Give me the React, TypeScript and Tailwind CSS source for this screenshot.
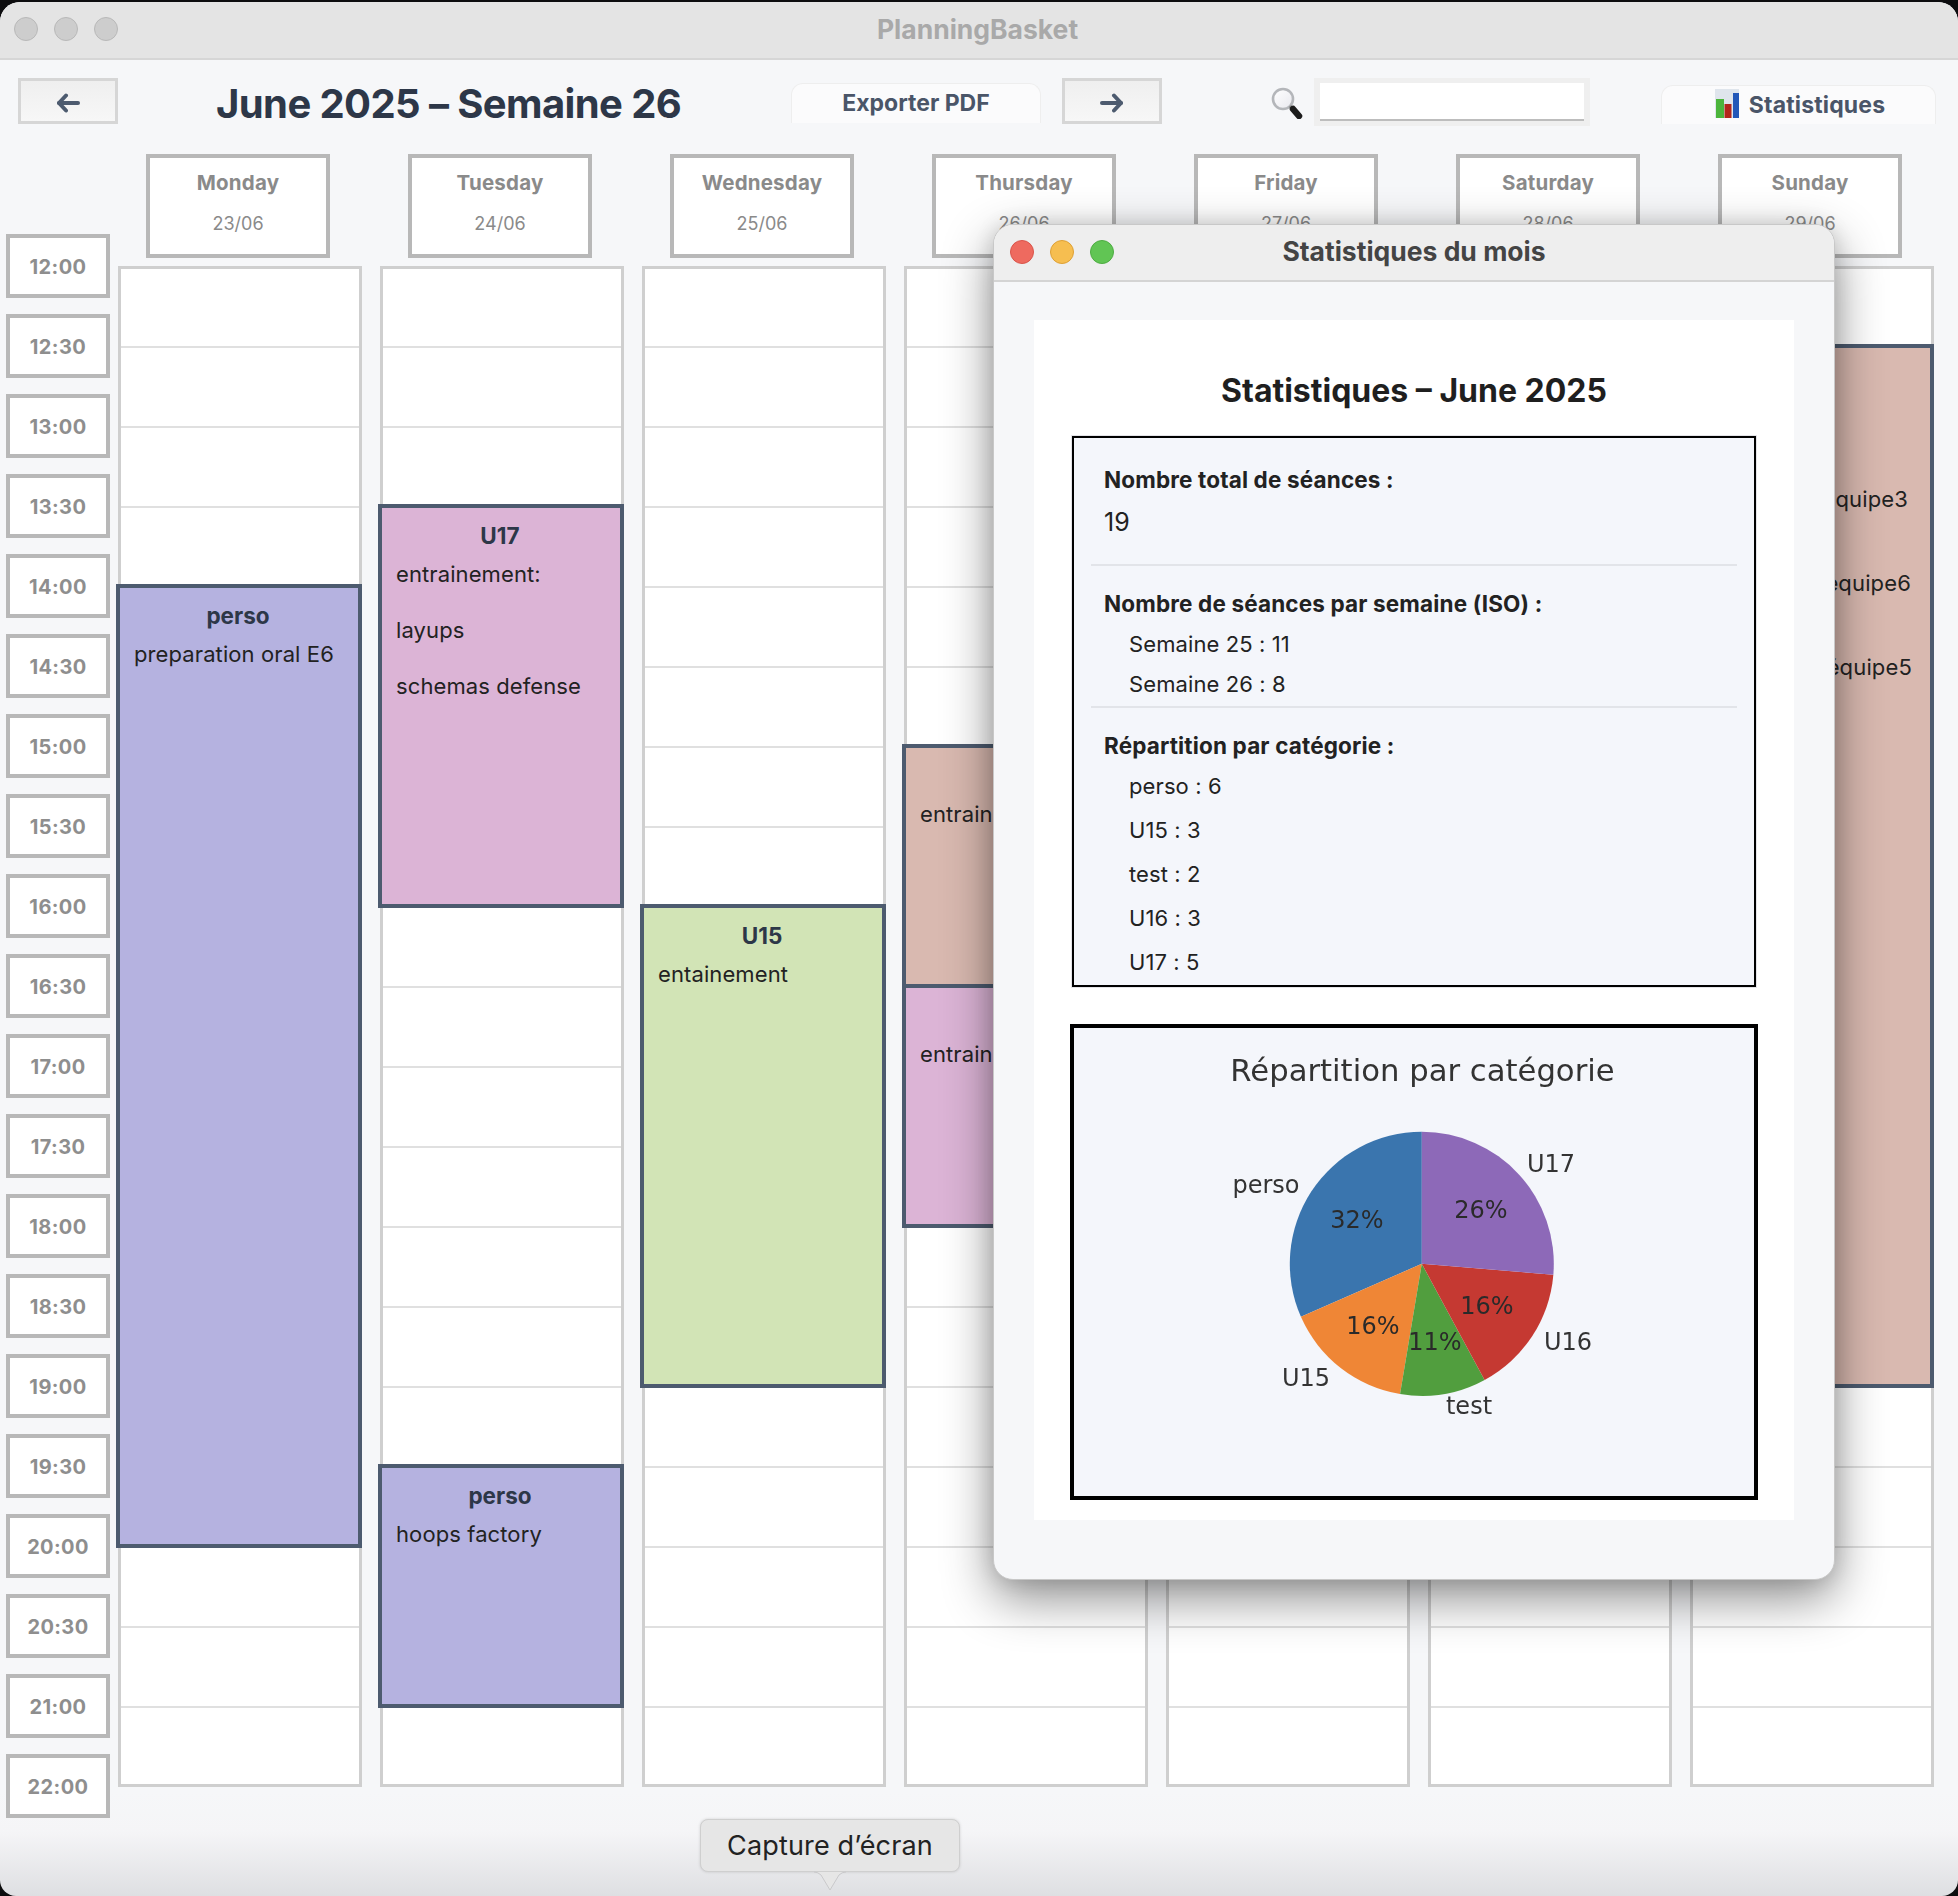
import React from "react";

const times = ["12:00","12:30","13:00","13:30","14:00","14:30","15:00","15:30","16:00","16:30","17:00","17:30","18:00","18:30","19:00","19:30","20:00","20:30","21:00","22:00"];

type Ev = { top: number; height: number; bg: string; title: string; lines: string[]; right?: boolean };

const PERSO = "bg-[#b5b2e0]";
const U17 = "bg-[#dcb4d6]";
const U15 = "bg-[#d2e4b6]";
const U16 = "bg-[#d9b9b0]";
const LINE_SHIFT = ["mr-0", "-mr-[3px]", "-mr-[4px]"];

const days: { name: string; date: string; events: Ev[] }[] = [
  { name: "Monday", date: "23/06", events: [{ top: 315, height: 964, bg: PERSO, title: "perso", lines: ["preparation oral E6"] }] },
  { name: "Tuesday", date: "24/06", events: [
    { top: 235, height: 404, bg: U17, title: "U17", lines: ["entrainement:", "layups", "schemas defense"] },
    { top: 1195, height: 244, bg: PERSO, title: "perso", lines: ["hoops factory"] },
  ] },
  { name: "Wednesday", date: "25/06", events: [{ top: 635, height: 484, bg: U15, title: "U15", lines: ["entainement"] }] },
  { name: "Thursday", date: "26/06", events: [
    { top: 475, height: 244, bg: U16, title: "U16", lines: ["entrainement"] },
    { top: 715, height: 244, bg: U17, title: "U17", lines: ["entrainement"] },
  ] },
  { name: "Friday", date: "27/06", events: [] },
  { name: "Saturday", date: "28/06", events: [] },
  { name: "Sunday", date: "29/06", events: [{ top: 75, height: 1044, bg: U16, title: "U16", lines: ["équipe3", "équipe6", "équipe5"], right: true }] },
];

function Arrow({ flip }: { flip?: boolean }) {
  return (
    <svg width="24" height="20" viewBox="0 0 24 20" className={flip ? "rotate-180" : ""}>
      <path d="M3 10H22" stroke="#4d5b6f" strokeWidth="4" strokeLinecap="round" fill="none" />
      <path d="M10 2.5L3 10L10 17.5" stroke="#4d5b6f" strokeWidth="4" strokeLinecap="round" strokeLinejoin="round" fill="none" />
    </svg>
  );
}

function Magnifier() {
  return (
    <svg width="32" height="32" viewBox="0 0 32 32" className="blur-[0.4px]">
      <defs>
        <linearGradient id="glass" x1="0" y1="0" x2="1" y2="1">
          <stop offset="0" stopColor="#ffffff" />
          <stop offset="1" stopColor="#e8e8ee" />
        </linearGradient>
      </defs>
      <circle cx="12" cy="12" r="10" fill="url(#glass)" stroke="#b4b6ba" strokeWidth="2.6" />
      <path d="M19 19L22 23" stroke="#8a8a8a" strokeWidth="3" />
      <path d="M22 22L28 29" stroke="#1c1c1c" strokeWidth="6.5" strokeLinecap="round" />
    </svg>
  );
}

function BarIcon() {
  return (
    <svg width="24" height="29" viewBox="0 0 24 29" className="mb-[3px] blur-[0.3px]">
      <rect x="0" y="0" width="24" height="29" fill="#dfe5ec" />
      <rect x="1" y="10" width="8" height="19" fill="#4cb53c" />
      <rect x="9.5" y="15" width="7" height="14" fill="#b3261b" />
      <rect x="18" y="4" width="6" height="25" fill="#2257b8" />
    </svg>
  );
}

function Pie() {
  const cx = 347.8;
  const cy = 235.8;
  const r = 132;
  const slices = [
    { v: 6, c: "#3a75ae" },
    { v: 3, c: "#ef8636" },
    { v: 2, c: "#519e3e" },
    { v: 3, c: "#c53932" },
    { v: 5, c: "#8d69b8" },
  ];
  let acc = 0;
  const paths = slices.map((s) => {
    const a0 = Math.PI / 2 + (acc / 19) * 2 * Math.PI;
    acc += s.v;
    const a1 = Math.PI / 2 + (acc / 19) * 2 * Math.PI;
    const x0 = cx + r * Math.cos(a0);
    const y0 = cy - r * Math.sin(a0);
    const x1 = cx + r * Math.cos(a1);
    const y1 = cy - r * Math.sin(a1);
    const large = a1 - a0 > Math.PI ? 1 : 0;
    return { d: `M${cx} ${cy}L${x0} ${y0}A${r} ${r} 0 ${large} 0 ${x1} ${y1}Z`, c: s.c };
  });
  const labels: [string, number, number][] = [
    ["perso", 192, 158],
    ["U17", 477, 137],
    ["U16", 494, 315],
    ["U15", 232, 351],
    ["test", 395, 379],
  ];
  const pct: [string, number, number][] = [
    ["32%", 283, 193],
    ["26%", 407, 183],
    ["16%", 413, 279],
    ["16%", 299, 299],
    ["11%", 361, 315],
  ];
  return (
    <svg width="680" height="468" viewBox="0 0 680 468" className="block blur-[0.3px]" fontFamily="'DejaVu Sans', sans-serif">
      {paths.map((p) => (
        <path key={p.c} d={p.d} fill={p.c} />
      ))}
      <text x="348.5" y="44" textAnchor="middle" dominantBaseline="middle" fontSize="30.7" fill="#333">Répartition par catégorie</text>
      {labels.map(([t, x, y]) => (
        <text key={t} x={x} y={y} textAnchor="middle" dominantBaseline="middle" fontSize="24" fill="#333">{t}</text>
      ))}
      {pct.map(([t, x, y]) => (
        <text key={t + x} x={x} y={y} textAnchor="middle" dominantBaseline="middle" fontSize="24" fill="#2a2a2a">{t}</text>
      ))}
    </svg>
  );
}

function EventCard({ ev }: { ev: Ev }) {
  return (
    <div
      className={`absolute left-[-5px] right-[-3px] border-4 border-[#4d5b6f] overflow-hidden ${ev.bg}`}
      style={{ top: ev.top, height: ev.height }}
    >
      <div className="pt-[13px] pr-[2px] text-center text-[22.5px] leading-[30px] font-bold text-[#2d3748]">{ev.title}</div>
      {ev.right ? (
        <div className="mt-[93px] pr-[22px] flex flex-col items-end gap-[54px] text-[22px] leading-[30px] tracking-[0.15px] text-[#222]">
          {ev.lines.map((l, i) => (
            <div key={l} className={LINE_SHIFT[i]}>{l}</div>
          ))}
        </div>
      ) : (
        <div className="mt-[8px] pl-[14px] flex flex-col gap-[26px] text-[22px] leading-[30px] tracking-[0.1px] text-[#222] whitespace-nowrap">
          {ev.lines.map((l) => (
            <div key={l}>{l}</div>
          ))}
        </div>
      )}
    </div>
  );
}

function Dot({ c }: { c: string }) {
  return <div className={`w-[24px] h-[24px] rounded-full border ${c}`} />;
}

function Modal() {
  return (
    <div className="absolute left-[993px] top-[224px] w-[842px] h-[1356px] rounded-[20px] bg-[#f6f7f9] border border-[#c8c8c8] shadow-[0_18px_50px_rgba(0,0,0,0.45),0_0_20px_rgba(0,0,0,0.12)] overflow-hidden">
      <div className="relative h-[57px] bg-[#eeeeee] border-b-2 border-[#d4d4d4] flex items-center pl-[16px] pb-[2px] gap-[16px]">
        <Dot c="bg-[#ee6a5f] border-[#d9544a]" />
        <Dot c="bg-[#f6be50] border-[#dea035]" />
        <Dot c="bg-[#61c554] border-[#4eac42]" />
        <div className="absolute inset-x-0 top-0 h-[53px] flex items-center justify-center text-[26.5px] font-bold text-[#444444]">Statistiques du mois</div>
      </div>
      <div className="mx-[40px] mt-[38px] w-[760px] h-[1200px] bg-white pt-[41px] px-[38px] flex flex-col items-center">
        <div className="h-[60px] leading-[60px] text-[32px] font-bold text-[#1f1f1f]">Statistiques – June 2025</div>
        <div className="mt-[15px] w-[684px] h-[551px] border-2 border-black outline outline-1 outline-[#e4e4e8] bg-[#f4f6fb] text-[#222] text-[22px] tracking-[0.1px] overflow-hidden">
          <div className="mx-[30px] pt-[26px] font-bold text-[22.5px] tracking-[0.15px] leading-[32px]">Nombre total de séances :</div>
          <div className="mx-[30px] mt-[10px] leading-[32px] text-[25px]">19</div>
          <div className="mx-[17px] mt-[26px] h-[2px] bg-[#e2e4e9]" />
          <div className="mx-[30px] mt-[22px] font-bold text-[22.5px] tracking-[0.15px] leading-[32px]">Nombre de séances par semaine (ISO) :</div>
          <div className="ml-[55px] mt-[8px] leading-[32px]">Semaine 25 : 11</div>
          <div className="ml-[55px] mt-[8px] leading-[32px]">Semaine 26 : 8</div>
          <div className="mx-[17px] mt-[6px] h-[2px] bg-[#e2e4e9]" />
          <div className="mx-[30px] mt-[22px] font-bold text-[22.5px] tracking-[0.15px] leading-[32px]">Répartition par catégorie :</div>
          <div className="ml-[55px] mt-[8px] flex flex-col gap-[12px] leading-[32px]">
            <div>perso : 6</div>
            <div>U15 : 3</div>
            <div>test : 2</div>
            <div>U16 : 3</div>
            <div>U17 : 5</div>
          </div>
        </div>
        <div className="mt-[37px] w-[688px] h-[476px] border-4 border-black bg-[#f4f6fb] shrink-0">
          <Pie />
        </div>
      </div>
    </div>
  );
}

export default function App() {
  return (
    <div className="relative w-[1958px] h-[1896px] bg-[#0d0d0f] overflow-hidden font-['Inter',sans-serif]">
      <div className="absolute inset-x-0 top-[2px] bottom-0 rounded-t-[20px] rounded-b-[16px] overflow-hidden bg-[linear-gradient(#f6f7f9_0,#f6f7f9_1790px,#f5f5f7_1830px,#dedfe2_100%)]">
        <div className="relative h-[58px] bg-[#e4e4e4] border-b-2 border-[#d6d6d6] flex items-center pl-[14px] pb-[2px] gap-[16px]">
          <Dot c="bg-[#cdcdcd] border-[#b8b8b8]" />
          <Dot c="bg-[#cdcdcd] border-[#b8b8b8]" />
          <Dot c="bg-[#cdcdcd] border-[#b8b8b8]" />
          <div className="absolute inset-x-0 top-0 h-[55px] pr-[3px] flex items-center justify-center text-[26.5px] font-bold text-[#a9a9a9]">PlanningBasket</div>
        </div>

        <div className="h-[94px] pt-[18px] pl-[18px] flex items-start">
          <button className="w-[100px] h-[46px] border-[3px] border-[#d6d6d6] bg-[linear-gradient(#efefef,#f7f7f7)] flex items-center justify-center pt-[4px]">
            <Arrow />
          </button>
          <div className="w-[673px] pl-[98px] h-[52px] leading-[52px] text-[40px] font-bold text-[#2d3748] tracking-[-0.6px] whitespace-nowrap">June 2025 – Semaine 26</div>
          <button className="mt-[5px] w-[250px] h-[40px] rounded-t-[12px] border border-b-0 border-[#eeeeee] bg-[#fbfbfc] text-[23px] font-bold text-[#4a5568] flex items-center justify-center">Exporter PDF</button>
          <button className="ml-[21px] w-[100px] h-[46px] border-[3px] border-[#d6d6d6] bg-[linear-gradient(#efefef,#f7f7f7)] flex items-center justify-center pt-[4px]">
            <Arrow flip />
          </button>
          <div className="ml-[109px] mt-[9px] w-[32px] h-[32px]"><Magnifier /></div>
          <div className="ml-[11px] w-[276px] h-[48px] bg-[#efefef] px-[6px] pt-[5px]">
            <div className="h-[38px] bg-white border-b-2 border-[#bdbdbd]" />
          </div>
          <button className="ml-[71px] mt-[7px] w-[275px] h-[39px] rounded-t-[12px] border border-b-0 border-[#eeeeee] bg-[#fbfbfc] text-[23px] tracking-[0.15px] font-bold text-[#4a5568] flex items-center justify-center gap-[10px] pl-[3px]">
            <BarIcon />
            <span>Statistiques</span>
          </button>
        </div>

        <div className="flex pl-[6px] items-start">
          <div className="w-[104px] mt-[80px] flex flex-col gap-[16px] shrink-0">
            {times.map((t) => (
              <div key={t} className="h-[64px] border-4 border-[#b8b8b8] bg-white flex items-center justify-center pt-[2px] text-[20px] font-bold text-[#8e8e8e] tracking-[0.4px]">{t}</div>
            ))}
          </div>
          <div className="ml-[8px] flex gap-[18px]">
            {days.map((d) => (
              <div key={d.name} className="w-[244px]">
                <div className="ml-[28px] w-[184px] h-[104px] border-4 border-[#b8b8b8] bg-white flex flex-col items-center text-[#8a8a8a]">
                  <div className="mt-[10px] leading-[30px] text-[20.5px] tracking-[0.2px] font-bold">{d.name}</div>
                  <div className="mt-[11px] leading-[30px] text-[18px]">{d.date}</div>
                </div>
                <div className="relative mt-[8px] h-[1521px] bg-white border-[3px] border-[#cfcfcf]">
                  <div className="flex flex-col -mt-[1px]">
                    {Array.from({ length: 19 }).map((_, i) => (
                      <div key={i} className={`h-[80px] ${i < 18 ? "border-b-2 border-[#e0e0e0]" : ""}`} />
                    ))}
                  </div>
                  {d.events.map((ev) => (
                    <EventCard key={ev.top} ev={ev} />
                  ))}
                </div>
              </div>
            ))}
          </div>
        </div>
      </div>

      <Modal />

      <div className="absolute left-[700px] top-[1819px] w-[260px] h-[53px] rounded-[8px] bg-[#e6e6e6] border border-[#cfcfcf] shadow-[0_0_3px_rgba(0,0,0,0.15)] flex items-center justify-center pt-[2px] text-[27px] tracking-[0.15px] text-[#222]">
        Capture d’écran
      </div>
      <svg className="absolute left-[812px] top-[1871px]" width="36" height="21" viewBox="0 0 36 21">
        <path d="M2 1Q6 1 9 4L18 19L27 4Q30 1 34 1Z" fill="#e6e6e6" />
        <path d="M2 1Q6 1 9 4L18 19L27 4Q30 1 34 1" fill="none" stroke="#c9c9cb" strokeWidth="1" />
      </svg>
    </div>
  );
}
